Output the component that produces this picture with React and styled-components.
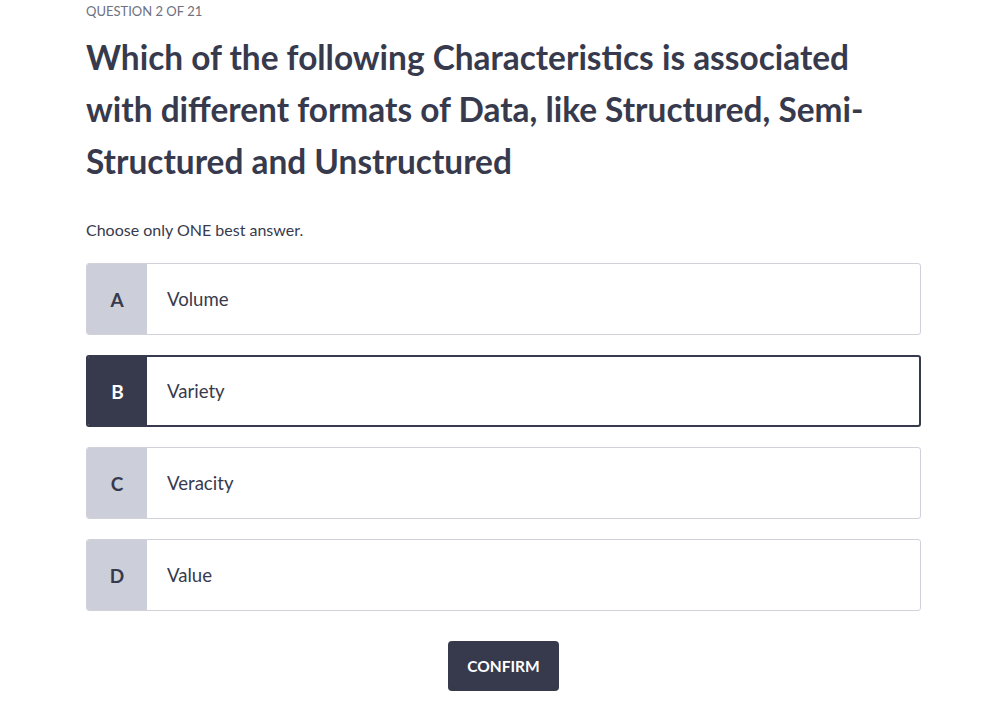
import React, { useState } from 'react';
import styled, { createGlobalStyle } from 'styled-components';

const GlobalStyle = createGlobalStyle`
  body {
    margin: 0;
    background: #fff;
    font-family: Lato, "Open Sans", sans-serif;
    color: #373a4d;
  }
`;

const Page = styled.main`
  width: 835px;
  padding-left: 86px;
`;

const Counter = styled.div`
  font-size: 13px;
  line-height: 22px;
  color: #6e7180;
  text-transform: uppercase;
`;

const Question = styled.h1`
  margin: 9px 0 0;
  font-size: 33.4px;
  line-height: 52px;
  font-weight: 700;
  color: #373a4d;
`;

const Hint = styled.p`
  margin: 31px 0 0;
  font-size: 16px;
  line-height: 24px;
  color: #373a4d;
`;

const Options = styled.ul`
  list-style: none;
  margin: 21px 0 0;
  padding: 0;
  display: flex;
  flex-direction: column;
  gap: 20px;
`;

const Option = styled.li`
  box-sizing: border-box;
  height: 72px;
  display: flex;
  align-items: stretch;
  border: ${(p) => (p.$selected ? '2px solid #373a4d' : '1px solid #d0d1d9')};
  border-radius: 3px;
  overflow: hidden;
  cursor: pointer;
  background: #fff;
`;

const Letter = styled.span`
  flex: 0 0 ${(p) => (p.$selected ? '59px' : '60px')};
  display: flex;
  align-items: center;
  justify-content: center;
  font-size: 19px;
  font-weight: 700;
  background: ${(p) => (p.$selected ? '#373a4d' : '#cccfd9')};
  color: ${(p) => (p.$selected ? '#fff' : '#373a4d')};
`;

const Label = styled.span`
  display: flex;
  align-items: center;
  padding-left: 20px;
  font-size: 18.6px;
  color: #373a4d;
`;

const Footer = styled.div`
  display: flex;
  justify-content: center;
  margin-top: 30px;
`;

const ConfirmButton = styled.button`
  width: 111px;
  height: 50px;
  border: none;
  border-radius: 4px;
  background: #373a4d;
  color: #fff;
  font-family: inherit;
  font-size: 15.5px;
  font-weight: 700;
  text-transform: uppercase;
  cursor: pointer;
`;

const answers = [
  { key: 'A', text: 'Volume' },
  { key: 'B', text: 'Variety' },
  { key: 'C', text: 'Veracity' },
  { key: 'D', text: 'Value' },
];

export default function App() {
  const [selected, setSelected] = useState('B');
  return (
    <Page>
      <GlobalStyle />
      <Counter>Question 2 of 21</Counter>
      <Question>
        Which of the following Characteristics is associated with different formats of Data,
        like Structured, Semi-Structured and Unstructured
      </Question>
      <Hint>Choose only ONE best answer.</Hint>
      <Options>
        {answers.map(({ key, text }) => (
          <Option key={key} $selected={selected === key} onClick={() => setSelected(key)}>
            <Letter $selected={selected === key}>{key}</Letter>
            <Label>{text}</Label>
          </Option>
        ))}
      </Options>
      <Footer>
        <ConfirmButton>Confirm</ConfirmButton>
      </Footer>
    </Page>
  );
}
